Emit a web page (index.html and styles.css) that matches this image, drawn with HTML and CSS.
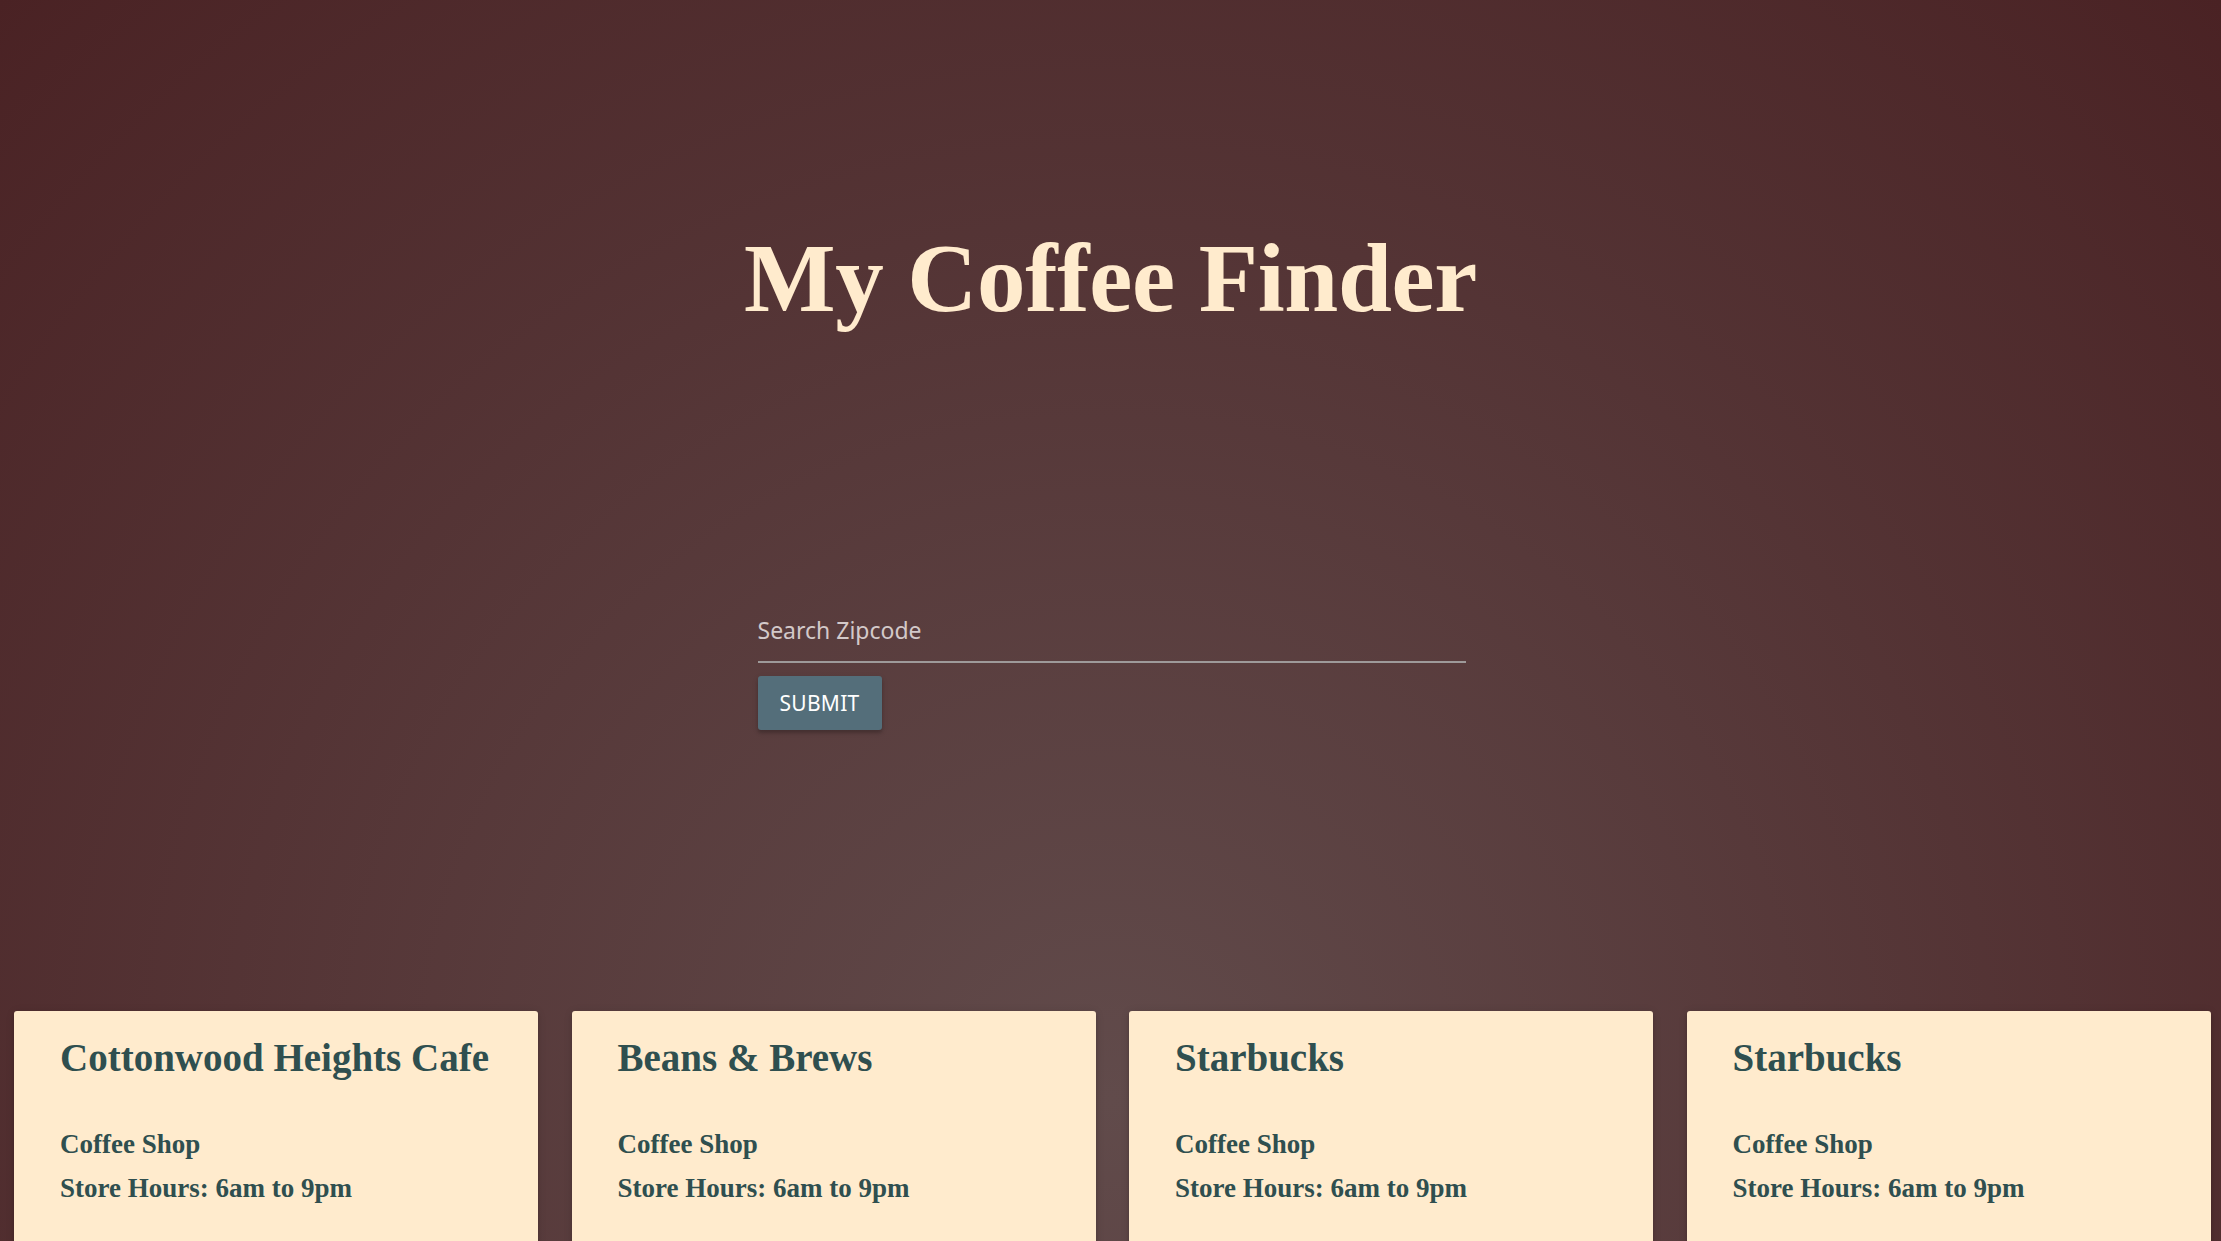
FILE: index.html
```html
<!DOCTYPE html>
<html lang="en">
<head>
<meta charset="utf-8">
<title>My Coffee Finder</title>
<link rel="stylesheet" href="styles.css">
</head>
<body>
<header class="hero">
  <h1 class="title">My Coffee Finder</h1>
  <form class="search">
    <input class="search-input" type="text" placeholder="Search Zipcode">
    <div class="search-actions">
      <button class="btn" type="button">SUBMIT</button>
    </div>
  </form>
</header>
<main class="cards">
  <div class="card">
    <h2 class="card-title">Cottonwood Heights Cafe</h2>
    <p class="card-line card-type">Coffee Shop</p>
    <p class="card-line">Store Hours: 6am to 9pm</p>
  </div>
  <div class="card">
    <h2 class="card-title">Beans &amp; Brews</h2>
    <p class="card-line card-type">Coffee Shop</p>
    <p class="card-line">Store Hours: 6am to 9pm</p>
  </div>
  <div class="card">
    <h2 class="card-title">Starbucks</h2>
    <p class="card-line card-type">Coffee Shop</p>
    <p class="card-line">Store Hours: 6am to 9pm</p>
  </div>
  <div class="card">
    <h2 class="card-title">Starbucks</h2>
    <p class="card-line card-type">Coffee Shop</p>
    <p class="card-line">Store Hours: 6am to 9pm</p>
  </div>
</main>
</body>
</html>
```
FILE: styles.css
```css
html {
  background: radial-gradient(ellipse 1570px 1560px at 50% 1100px, #614b4b 0%, #4a2224 100%);
  background-color: #4a2224;
  min-height: 100%;
}
body {
  margin: 0;
  font-family: "Noto Sans", "Open Sans", sans-serif;
  overflow: hidden;
}
.hero {
  display: flex;
  flex-direction: column;
  align-items: center;
  padding-top: 223px;
}
.title {
  margin: 0;
  font-family: "Liberation Serif", "Times New Roman", serif;
  font-weight: 700;
  font-size: 97px;
  line-height: normal;
  letter-spacing: -0.3px;
  color: #ffebcd;
}
.search {
  width: 708px;
  margin-top: 265px;
  transform: translateX(1px);
}
.search-input {
  display: block;
  box-sizing: border-box;
  width: 100%;
  height: 64px;
  margin: 0;
  padding: 0;
  border: none;
  border-bottom: 2px solid #9e9a9a;
  background: transparent;
  font-family: "Noto Sans", "Open Sans", sans-serif;
  font-size: 23px;
  color: #e8dede;
  outline: none;
}
.search-input::placeholder {
  color: #d3c9c9;
}
.search-actions {
  margin-top: 13px;
}
.btn {
  height: 54px;
  width: 124px;
  padding: 0;
  border: none;
  border-radius: 3px;
  background: #546e7a;
  color: #ffffff;
  font-family: "Noto Sans", "Open Sans", sans-serif;
  font-size: 21px;
  letter-spacing: 0.3px;
  box-shadow: 0 3px 3px rgba(0,0,0,0.16), 0 2px 6px rgba(0,0,0,0.12);
}
.cards {
  display: grid;
  grid-template-columns: repeat(4, 524px);
  column-gap: 33.5px;
  padding-left: 14px;
  margin-top: 281px;
}
.card {
  height: 300px;
  box-sizing: border-box;
  padding: 24px 40px 0 46px;
  background: #ffebcd;
  border-radius: 3px;
  box-shadow: 0 3px 3px rgba(0,0,0,0.14), 0 1px 8px rgba(0,0,0,0.12);
  color: #2f4f4f;
  font-family: "Liberation Serif", "Times New Roman", serif;
  font-weight: 700;
}
.card-title {
  margin: 0;
  font-size: 39px;
  line-height: 45px;
  font-weight: 700;
}
.card-line {
  margin: 0;
  font-size: 27px;
  line-height: 31px;
}
.card-type {
  margin-top: 49px;
  margin-bottom: 13px;
}
```
